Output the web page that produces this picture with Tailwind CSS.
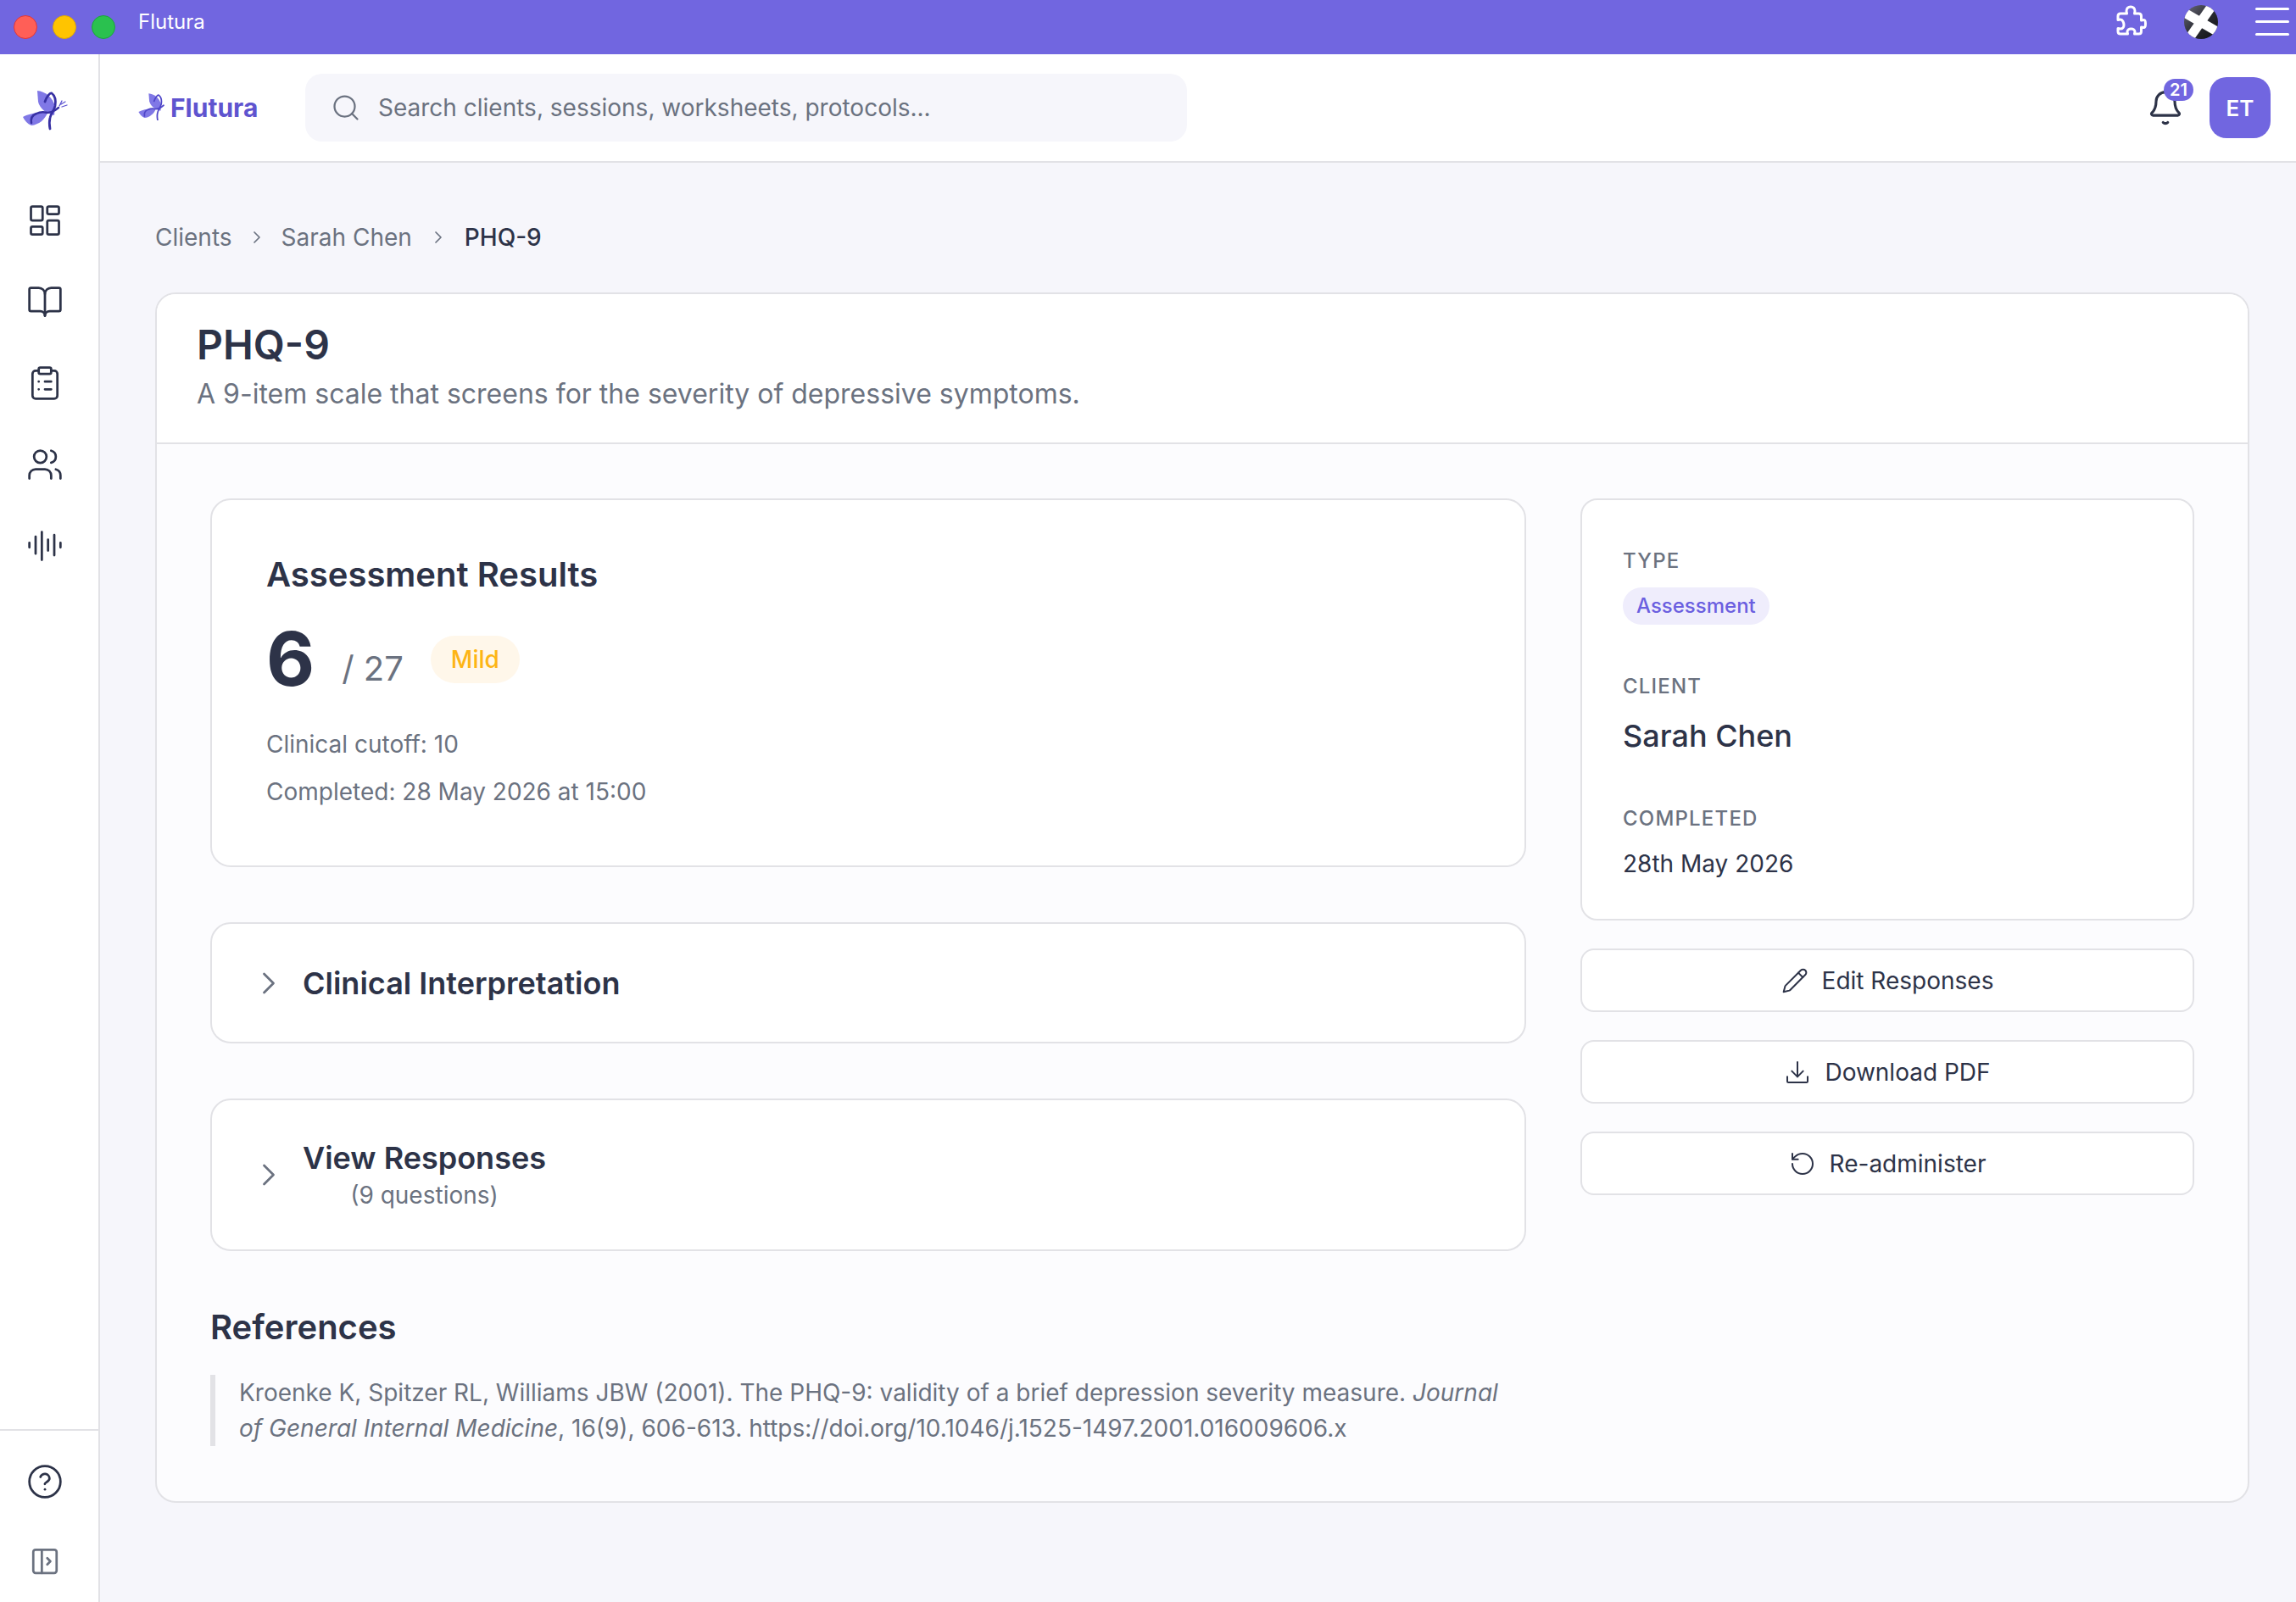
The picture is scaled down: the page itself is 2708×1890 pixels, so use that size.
<!DOCTYPE html>
<html lang="en">
<head>
  <meta charset="UTF-8">
  <meta name="viewport" content="width=device-width, initial-scale=1.0">
  <title>Flutura</title>
  <script src="https://cdn.jsdelivr.net/npm/@tailwindcss/browser@4"></script>
</head>
<body class="w-[2708px] h-[1890px] overflow-hidden font-['Inter',sans-serif] bg-[#f6f6fb] text-[#2d3348]">

  <!-- Window title bar -->
  <div class="h-16 bg-[#7166e0] flex items-center pl-4 pr-2 text-white">
    <div class="flex gap-[18px]">
      <span class="w-7 h-7 rounded-full bg-[#ff5f57] border border-[#e0353a]"></span>
      <span class="w-7 h-7 rounded-full bg-[#ffc400] border border-[#e0a800]"></span>
      <span class="w-7 h-7 rounded-full bg-[#2ac14f] border border-[#1ca53c]"></span>
    </div>
    <span class="ml-[27px] text-2xl leading-none -mt-3">Flutura</span>
    <div class="ml-auto flex items-center">
      <svg class="w-[38px] h-[38px] -mt-[15px]" viewBox="0 0 38 38" fill="none" stroke="#fff" stroke-width="3" stroke-linejoin="round"><path d="M14 7c0-3 2-5 5-5s5 2 5 5c0 1-.5 2-.5 3h5c2 0 3 1 3 3v5c1 0 2-.5 3-.5 1.500 0 2 2 2 4.500s-.5 4.500-2 4.500c-1 0-2-.5-3-.5v5c0 2-1 3-3 3h-5c0-1 .5-1.500.5-2.500 0-2-2-3.500-4.500-3.500s-4.500 1.500-4.500 3.500c0 1 .5 1.500.5 2.500H7c-2 0-3-1-3-3v-3.500c1 0 2 .5 3 .5 2.500 0 4-2 4-4.500S9.500 17 7 17c-1 0-2 .5-3 .5V13c0-2 1-3 3-3h7.500c0-1-.5-2-.5-3z"/></svg>
      <div class="ml-[44px] -mt-[12px] w-10 h-10 rounded-full overflow-hidden relative bg-gradient-to-br from-[#6f6f80] via-[#2b2c33] to-[#0f1012]">
        <span class="absolute left-[14px] -top-[4px] w-[11px] h-[48px] bg-white rotate-[35deg]"></span>
        <span class="absolute left-[14px] -top-[4px] w-[11px] h-[48px] bg-white -rotate-[60deg]"></span>
      </div>
      <div class="ml-11 -mt-[14px] w-10 flex flex-col gap-3">
        <span class="h-[3px] rounded-full bg-white"></span>
        <span class="h-[3px] rounded-full bg-white"></span>
        <span class="h-[3px] rounded-full bg-white"></span>
      </div>
    </div>
  </div>

  <div class="flex h-[1826px]">
    <!-- Sidebar -->
    <aside class="w-[118px] shrink-0 bg-white border-r-2 border-[#e2e2e6] flex flex-col">
      <div class="h-[174px] pl-5 pt-[36px]">
        <svg class="w-[70px] h-[60px]" viewBox="0 0 70 60" fill="none">
          <path d="M24 7C33 8 42 14 45 26L44 36C34 34 27 28 25 20Z" fill="#8078e6"/>
          <path d="M7 38C14 34 25 32 36 33 33 41 26 47 17 48 12 46 9 42 7 38Z" fill="#8078e6"/>
          <path d="M33 20c2-6 6-11 8-10 4 3 5 9 4 15-1 5-5 9-6 14-1 4-1 8 0 13" stroke="#3730a3" stroke-width="2.800" stroke-linecap="round"/>
          <path d="M17 45c-1-5 1-9 6-11 4-2 9-2 13-1 3 0 6-1 9-3l4-3" stroke="#3730a3" stroke-width="2.500" stroke-linecap="round"/>
          <path d="M50 25l3-6M53 26l6-2M52 23l5-3" stroke="#5b52d0" stroke-width="1.300" stroke-linecap="round"/>
        </svg>
      </div>
      <nav class="flex flex-col items-center gap-[52px] -ml-[10px] text-[#2d3348]">
        <svg class="w-11 h-11" viewBox="0 0 24 24" fill="none" stroke="currentColor" stroke-width="1.500" stroke-linecap="round" stroke-linejoin="round"><rect x="3" y="3" width="7.500" height="9" rx="1"/><rect x="13.500" y="3" width="7.500" height="5" rx="1"/><rect x="13.500" y="12" width="7.500" height="9" rx="1"/><rect x="3" y="16" width="7.500" height="5" rx="1"/></svg>
        <svg class="w-11 h-11" viewBox="0 0 24 24" fill="none" stroke="currentColor" stroke-width="1.500" stroke-linecap="round" stroke-linejoin="round"><path d="M12 7v14"/><path d="M3 18a1 1 0 0 1-1-1V4a1 1 0 0 1 1-1h5a4 4 0 0 1 4 4 4 4 0 0 1 4-4h5a1 1 0 0 1 1 1v13a1 1 0 0 1-1 1h-6a3 3 0 0 0-3 3 3 3 0 0 0-3-3z"/></svg>
        <svg class="w-11 h-11" viewBox="0 0 24 24" fill="none" stroke="currentColor" stroke-width="1.500" stroke-linecap="round" stroke-linejoin="round"><rect x="8" y="2" width="8" height="4" rx="1"/><path d="M16 4h2a2 2 0 0 1 2 2v14a2 2 0 0 1-2 2H6a2 2 0 0 1-2-2V6a2 2 0 0 1 2-2h2"/><path d="M12 11h4M12 16h4M8 11h.01M8 16h.01"/></svg>
        <svg class="w-11 h-11" viewBox="0 0 24 24" fill="none" stroke="currentColor" stroke-width="1.500" stroke-linecap="round" stroke-linejoin="round"><path d="M16 21v-2a4 4 0 0 0-4-4H6a4 4 0 0 0-4 4v2"/><circle cx="9" cy="7" r="4"/><path d="M16 3.130a4 4 0 0 1 0 7.750"/><path d="M22 21v-2a4 4 0 0 0-3-3.870"/></svg>
        <svg class="w-11 h-11" viewBox="0 0 24 24" fill="none" stroke="currentColor" stroke-width="1.500" stroke-linecap="round" stroke-linejoin="round"><path d="M2 10v3M6 6v11M10 3v18M14 8v7M18 5v13M22 10v3"/></svg>
      </nav>
      <div class="mt-auto border-t-2 border-[#e2e2e6] h-[204px] flex flex-col items-center -ml-[10px] pt-[38px] gap-[52px]">
        <svg class="w-11 h-11" viewBox="0 0 24 24" fill="none" stroke="#2d3348" stroke-width="1.500" stroke-linecap="round" stroke-linejoin="round"><circle cx="12" cy="12" r="10"/><path d="M9.090 9a3 3 0 0 1 5.830 1c0 2-3 2.500-3 3.500"/><path d="M12 17h.01"/></svg>
        <svg class="w-11 h-11 -mt-[2px]" viewBox="0 0 24 24" fill="none" stroke="#6b7280" stroke-width="1.500" stroke-linecap="round" stroke-linejoin="round"><rect x="4.500" y="4.500" width="15" height="15" rx="1.500"/><path d="M10 4.500v15"/><path d="M13.500 10l2 2-2 2"/></svg>
      </div>
    </aside>

    <div class="flex-1 flex flex-col min-w-0">
      <!-- Top header -->
      <header class="h-[128px] shrink-0 bg-white border-b-2 border-[#e2e2e6] flex items-center pl-[44px] pr-[30px]">
        <div class="flex items-center w-[198px]">
          <svg class="w-[38px] h-[34px] -mt-[4px]" viewBox="5 4 54 48" fill="none">
            <path d="M24 7C33 8 42 14 45 26L44 36C34 34 27 28 25 20Z" fill="#8078e6"/>
            <path d="M7 38C14 34 25 32 36 33 33 41 26 47 17 48 12 46 9 42 7 38Z" fill="#8078e6"/>
            <path d="M33 20c2-6 6-11 8-10 4 3 5 9 4 15-1 5-5 9-6 14-1 4-1 8 0 13" stroke="#4f46c8" stroke-width="2.500" stroke-linecap="round"/>
            <path d="M17 45c-1-5 1-9 6-11 4-2 9-2 13-1 3 0 6-1 9-3l4-3" stroke="#4f46c8" stroke-width="2.500" stroke-linecap="round"/>
          </svg>
          <span class="ml-[1px] text-[30px] font-bold text-[#5f54cf]">Flutura</span>
        </div>
        <div class="w-[1040px] h-20 bg-[#f6f6fb] rounded-[20px] flex items-center pl-[30px]">
          <svg class="w-9 h-9 text-[#6b7280]" viewBox="0 0 24 24" fill="none" stroke="currentColor" stroke-width="1.500" stroke-linecap="round" stroke-linejoin="round"><circle cx="11" cy="11" r="8"/><path d="m21 21-4.300-4.300"/></svg>
          <span class="ml-5 text-[28px] text-[#6b7280]">Search clients, sessions, worksheets, protocols...</span>
        </div>
        <div class="ml-auto flex items-center">
          <div class="relative w-11 h-11">
            <svg class="w-11 h-11 -translate-x-[1px]" viewBox="0 0 24 24" fill="none" stroke="#2d3348" stroke-width="1.700" stroke-linecap="round" stroke-linejoin="round"><path d="M10.500 21.500a2 2 0 0 0 3 0"/><path d="M3.300 15.300A1 1 0 0 0 4 17h16a1 1 0 0 0 .7-1.700C19.400 14 18 12.500 18 8A6 6 0 0 0 6 8c0 4.500-1.400 6-2.700 7.300"/></svg>
            <span class="absolute left-[19px] -top-[12px] w-[35px] h-[26px] rounded-full bg-[#7166e0] text-white text-[20px] leading-[26px] font-semibold text-center">21</span>
          </div>
          <div class="ml-[29px] w-[72px] h-[72px] rounded-[20px] bg-[#7166e0] text-white text-[26px] font-semibold flex items-center justify-center">ET</div>
        </div>
      </header>

      <!-- Main content -->
      <main class="flex-1 pl-[65px] pr-[55px] pt-[68px]">
        <nav class="flex items-center text-[28px] leading-10 text-[#6b7280]">
          <span>Clients</span>
          <svg class="w-6 h-6 mx-[17px]" viewBox="0 0 24 24" fill="none" stroke="currentColor" stroke-width="1.700" stroke-linecap="round" stroke-linejoin="round"><path d="m9 6 6 6-6 6"/></svg>
          <span>Sarah Chen</span>
          <svg class="w-6 h-6 mx-[19px]" viewBox="0 0 24 24" fill="none" stroke="currentColor" stroke-width="1.700" stroke-linecap="round" stroke-linejoin="round"><path d="m9 6 6 6-6 6"/></svg>
          <span class="font-medium text-[#2d3348]">PHQ-9</span>
        </nav>

        <section class="mt-[45px] bg-[#fcfcfe] border-2 border-[#e2e2e6] rounded-[24px] overflow-hidden">
          <div class="h-[177px] bg-white border-b-2 border-[#e2e2e6] pl-[47px] pt-[30px]">
            <h1 class="text-[48px] leading-[60px] font-semibold">PHQ-9</h1>
            <p class="mt-[-1px] text-[32px] leading-[58px] text-[#6b7280]">A 9-item scale that screens for the severity of depressive symptoms.</p>
          </div>

          <div class="grid grid-cols-[1552px_724px] gap-x-[64px] items-start px-[63px] pt-[64px] pb-[65px]">
            <div>
              <div class="h-[435px] bg-white border-2 border-[#e2e2e6] rounded-[24px] pl-[64px] pt-[62px]">
                <h2 class="text-[40px] leading-[52px] font-semibold">Assessment Results</h2>
                <div class="mt-[17px] flex items-start h-[112px]">
                  <span class="text-[88px] leading-[112px] font-bold">6</span>
                  <span class="ml-[32px] mt-[38px] text-[40px] leading-[60px] text-[#6b7280]">/ 27</span>
                  <span class="ml-[32px] mt-[29px] w-[105px] h-14 rounded-full bg-[#fff7ea] text-[#fdb515] text-[28px] font-medium flex items-center justify-center">Mild</span>
                </div>
                <p class="mt-[17px] text-[28px] leading-[56px] text-[#6b7280]">Clinical cutoff: 10</p>
                <p class="text-[28px] leading-[56px] text-[#6b7280]">Completed: 28 May 2026 at 15:00</p>
              </div>

              <div class="mt-[65px] h-[143px] bg-white border-2 border-[#e2e2e6] rounded-[24px] flex items-center pl-[45px]">
                <svg class="w-[44px] h-[44px] text-[#6b7280]" viewBox="0 0 24 24" fill="none" stroke="currentColor" stroke-width="1.500" stroke-linecap="round" stroke-linejoin="round"><path d="m9 6 6 6-6 6"/></svg>
                <h3 class="ml-[18px] text-[36px] font-semibold">Clinical Interpretation</h3>
              </div>

              <div class="mt-[65px] h-[180px] bg-white border-2 border-[#e2e2e6] rounded-[24px] flex items-center pl-[45px]">
                <svg class="w-[44px] h-[44px] text-[#6b7280]" viewBox="0 0 24 24" fill="none" stroke="currentColor" stroke-width="1.500" stroke-linecap="round" stroke-linejoin="round"><path d="m9 6 6 6-6 6"/></svg>
                <div class="ml-[18px] text-center">
                  <h3 class="text-[36px] leading-[48px] font-semibold">View Responses</h3>
                  <p class="text-[28px] leading-[40px] text-[#6b7280]">(9 questions)</p>
                </div>
              </div>

              <h2 class="mt-[63px] text-[40px] leading-[54px] font-semibold">References</h2>
              <blockquote class="mt-[29px] border-l-[6px] border-[#e2e2e6] pl-[28px] text-[28px] leading-[42px] text-[#6b7280]">
                Kroenke K, Spitzer RL, Williams JBW (2001). The PHQ-9: validity of a brief depression severity measure. <em>Journal of General Internal Medicine</em>, 16(9), 606-613. https://doi.org/10.1046/j.1525-1497.2001.016009606.x
              </blockquote>
            </div>

            <div class="flex flex-col">
              <div class="h-[498px] bg-white border-2 border-[#e2e2e6] rounded-[20px] pl-[48px] pt-[54px]">
                <p class="text-[24px] leading-9 font-medium tracking-[1.200px] text-[#6b7280]">TYPE</p>
                <span class="mt-[13px] inline-block h-11 px-4 rounded-full bg-[#efedfc] text-[#6b5fe0] text-[24px] font-medium leading-[44px]">Assessment</span>
                <p class="mt-[55px] text-[24px] leading-9 font-medium tracking-[1.200px] text-[#6b7280]">CLIENT</p>
                <p class="mt-[15px] text-[36px] leading-[50px] font-medium">Sarah Chen</p>
                <p class="mt-[55px] text-[24px] leading-9 font-medium tracking-[1.200px] text-[#6b7280]">COMPLETED</p>
                <p class="mt-[15px] text-[28px] leading-[40px]">28th May 2026</p>
              </div>
              <button class="mt-[33px] h-[75px] bg-white border-2 border-[#e2e2e6] rounded-[16px] flex items-center justify-center gap-[16px] text-[28px]">
                <svg class="w-8 h-8" viewBox="0 0 24 24" fill="none" stroke="currentColor" stroke-width="1.500" stroke-linecap="round" stroke-linejoin="round"><path d="M21.200 6.800a2.800 2.800 0 0 0-4-4L3.800 16.200a2 2 0 0 0-.5.8L2 22l5-1.300a2 2 0 0 0 .8-.5z"/><path d="m15 5 4 4"/></svg>
                Edit Responses
              </button>
              <button class="mt-[33px] h-[75px] bg-white border-2 border-[#e2e2e6] rounded-[16px] flex items-center justify-center gap-[16px] text-[28px]">
                <svg class="w-8 h-8" viewBox="0 0 24 24" fill="none" stroke="currentColor" stroke-width="1.500" stroke-linecap="round" stroke-linejoin="round"><path d="M12 3v13"/><path d="m7 11 5 5 5-5"/><path d="M3 16v4a1 1 0 0 0 1 1h16a1 1 0 0 0 1-1v-4"/></svg>
                Download PDF
              </button>
              <button class="mt-[33px] h-[75px] bg-white border-2 border-[#e2e2e6] rounded-[16px] flex items-center justify-center gap-[16px] text-[28px]">
                <svg class="w-8 h-8" viewBox="0 0 24 24" fill="none" stroke="currentColor" stroke-width="1.500" stroke-linecap="round" stroke-linejoin="round"><path d="M3 12a9 9 0 1 0 9-9 9.750 9.750 0 0 0-6.740 2.740L3 8"/><path d="M3 3v5h5"/></svg>
                Re-administer
              </button>
            </div>
          </div>
        </section>
      </main>
    </div>
  </div>
</body>
</html>
